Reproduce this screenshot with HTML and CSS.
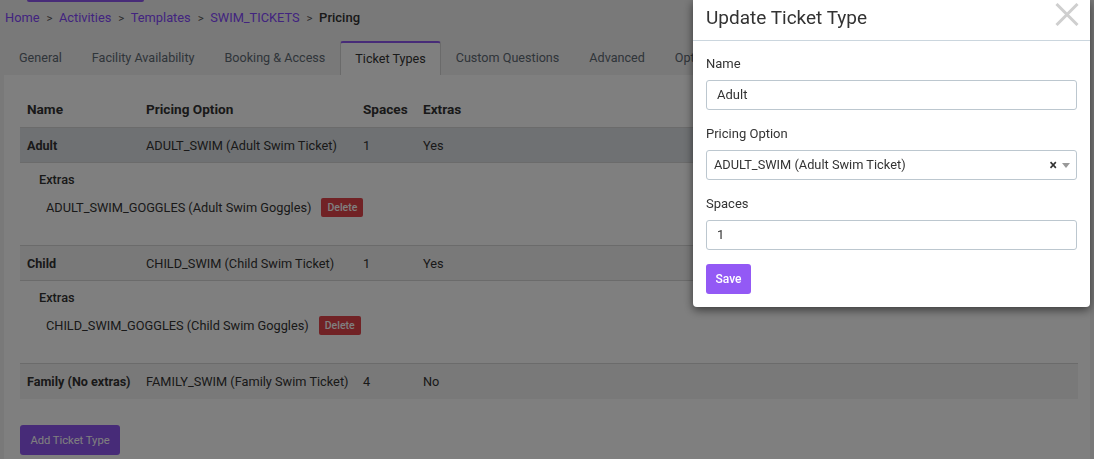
FILE: index.html
```html
<!DOCTYPE html>
<html lang="en">
<head>
<meta charset="utf-8">
<title>Pricing</title>
<link rel="stylesheet" href="styles.css">
</head>
<body>
<div class="page">
  <div class="stub"></div>
  <nav class="crumbs">
    <a href="#">Home</a><span class="sep">&gt;</span><a href="#">Activities</a><span class="sep">&gt;</span><a href="#">Templates</a><span class="sep">&gt;</span><a href="#">SWIM_TICKETS</a><span class="sep">&gt;</span><span class="current">Pricing</span>
  </nav>
  <ul class="tabs">
    <li class="tab">General</li>
    <li class="tab">Facility Availability</li>
    <li class="tab">Booking &amp; Access</li>
    <li class="tab active">Ticket Types</li>
    <li class="tab">Custom Questions</li>
    <li class="tab">Advanced</li>
    <li class="tab">Options</li>
  </ul>
  <div class="card">
    <table class="tickets">
      <colgroup>
        <col class="c-name"><col class="c-price"><col class="c-spaces"><col class="c-extras">
      </colgroup>
      <thead>
        <tr><th>Name</th><th>Pricing Option</th><th>Spaces</th><th>Extras</th></tr>
      </thead>
      <tbody>
        <tr class="row row-active"><td class="bold">Adult</td><td>ADULT_SWIM (Adult Swim Ticket)</td><td>1</td><td>Yes</td></tr>
        <tr class="extras-row"><td colspan="4">
          <div class="extras">
            <div class="extras-title">Extras</div>
            <div class="extra-item"><span>ADULT_SWIM_GOGGLES (Adult Swim Goggles)</span><button class="btn-del">Delete</button></div>
          </div>
        </td></tr>
        <tr class="row"><td class="bold">Child</td><td>CHILD_SWIM (Child Swim Ticket)</td><td>1</td><td>Yes</td></tr>
        <tr class="extras-row"><td colspan="4">
          <div class="extras">
            <div class="extras-title">Extras</div>
            <div class="extra-item"><span>CHILD_SWIM_GOGGLES (Child Swim Goggles)</span><button class="btn-del">Delete</button></div>
          </div>
        </td></tr>
        <tr class="row row-last"><td class="bold">Family (No extras)</td><td>FAMILY_SWIM (Family Swim Ticket)</td><td>4</td><td>No</td></tr>
      </tbody>
    </table>
    <button class="btn-add">Add Ticket Type</button>
  </div>
</div>

<div class="backdrop"></div>

<div class="modal">
  <div class="modal-header">
    <h2 class="modal-title">Update Ticket Type</h2>
    <button class="modal-close" aria-label="Close">
      <svg width="24" height="23" viewBox="0 0 24 23"><path d="M1.5 1 L22.5 22 M22.5 1 L1.5 22" stroke="#cfcfcf" stroke-width="3" fill="none"/></svg>
    </button>
  </div>
  <div class="modal-body">
    <div class="field">
      <label class="field-label">Name</label>
      <div class="input">Adult</div>
    </div>
    <div class="field">
      <label class="field-label">Pricing Option</label>
      <div class="select">
        <span class="select-value">ADULT_SWIM (Adult Swim Ticket)</span>
        <span class="select-clear">×</span>
        <span class="select-arrow"></span>
      </div>
    </div>
    <div class="field">
      <label class="field-label">Spaces</label>
      <div class="input">1</div>
    </div>
    <button class="btn-save">Save</button>
  </div>
</div>
</body>
</html>
```

FILE: styles.css
```css
* { box-sizing: border-box; }
html, body { margin: 0; padding: 0; }
body {
  font-family: Roboto, "Liberation Sans", Arial, sans-serif;
  font-size: 13px;
  color: #333;
  background: #f2f2f2;
  height: 459px;
  overflow: hidden;
}
.page { padding: 0 4px; }
.stub {
  margin-left: 23px;
  width: 117px;
  height: 2px;
  background: #8f57f0;
  border-radius: 0 0 3px 3px;
}
.crumbs {
  margin: 6px 0 0 1px;
  height: 20px;
  line-height: 20px;
  font-size: 12.8px;
}
.crumbs a { color: #8448ff; text-decoration: none; }
.crumbs .sep { color: #555; margin: 0 6.5px 0 7px; font-size: 11.5px; }
.crumbs .current { color: #333; font-weight: 500; font-size: 13px; }

.tabs {
  list-style: none;
  margin: 13px 0 0 0;
  padding: 0;
  display: flex;
  height: 34px;
}
.tab {
  padding: 0 14px;
  line-height: 30px;
  font-size: 12.6px;
  color: #5f6a74;
  border: 1px solid transparent;
  border-top-width: 2px;
  border-bottom: none;
  white-space: nowrap;
}
.tab.active {
  background: #fff;
  color: #333;
  border-color: #d4d4d4;
  border-top-color: #8f57f0;
  border-radius: 3px 3px 0 0;
  line-height: 32px;
}
.card {
  background: #fff;
  padding: 16px 12px 16px 16px;
  height: 400px;
}
.tickets {
  width: 100%;
  border-collapse: separate;
  border-spacing: 0;
  table-layout: fixed;
}
.c-name { width: 119px; }
.c-price { width: 217px; }
.c-spaces { width: 60px; }
.tickets th {
  text-align: left;
  font-weight: 700;
  height: 36px;
  padding: 0 7px;
  font-size: 13.6px;
  color: #333;
}
.tickets td {
  padding: 0 7px;
  font-size: 12.75px;
  color: #333;
  white-space: nowrap;
}
.row td {
  height: 36px;
  border-top: 1px solid #d6d6d6;
  border-bottom: 1px solid #d6d6d6;
  background: #f3f3f3;
}
.row-active td { background: #dfe3e7; }
.row-last td { border-bottom: none; }
.tickets td.bold { font-weight: 700; font-size: 12.6px; }
.extras-row td { padding: 0; height: 82px; vertical-align: top; }
.extras { padding: 7px 19px 0 19px; }
.extras-title { font-weight: 500; line-height: 20px; font-size: 12.75px; }
.extra-item {
  display: flex;
  align-items: center;
  gap: 10px;
  margin: 7px 0 0 7px;
  height: 20px;
}
.btn-del {
  font-family: inherit;
  font-size: 10.5px;
  font-weight: 500;
  color: #fff;
  background: #e2454b;
  border: none;
  border-radius: 2px;
  height: 19px;
  padding: 0 6px;
}
.btn-add {
  margin-top: 26px;
  font-family: inherit;
  font-size: 11.2px;
  color: #fff;
  background: #8f57f0;
  border: none;
  border-radius: 3px;
  height: 30px;
  width: 100px;
  padding: 0;
}

.backdrop {
  position: fixed;
  inset: 0;
  background: rgba(0, 0, 0, 0.5);
}
.modal {
  position: fixed;
  left: 693px;
  top: 0;
  width: 397px;
  background: #fff;
  box-shadow: 0 3px 10px rgba(0, 0, 0, 0.55);
  border-radius: 0 0 4px 4px;
}
.modal-header {
  position: relative;
  height: 41px;
  padding: 6px 13px 0 13px;
  border-bottom: 1px solid #cbd6de;
}
.modal-title {
  margin: 0;
  font-size: 19px;
  font-weight: 400;
  line-height: 24px;
  color: #333;
}
.modal-close {
  position: absolute;
  right: 11px;
  top: 3px;
  padding: 0;
  border: none;
  background: none;
  width: 24px;
  height: 23px;
}
.modal-close svg { display: block; }
.modal-body { padding: 13px 13px 13px 13px; }
.field { margin-bottom: 14px; }
.field-label { display: block; line-height: 19px; margin-bottom: 7px; font-size: 13px; color: #333; }
.input, .select {
  height: 30px;
  border: 1px solid #bcc7cf;
  border-radius: 3px;
  line-height: 28px;
  font-size: 13px;
  color: #333;
}
.input { padding: 0 10px; }
.select { display: flex; align-items: center; padding: 0 0 0 7px; font-size: 12.8px; }
.select-value { flex: 1; }
.select-clear { font-weight: 700; font-size: 14px; margin-right: 5px; color: #333; }
.select-arrow {
  width: 0; height: 0;
  border-left: 4px solid transparent;
  border-right: 4px solid transparent;
  border-top: 5px solid #999;
  margin-right: 6px;
}
.btn-save {
  display: block;
  font-family: inherit;
  font-size: 12px;
  font-weight: 500;
  color: #fff;
  background: #9359f5;
  border: none;
  border-radius: 3px;
  height: 30px;
  width: 45px;
  padding: 0;
}
```
